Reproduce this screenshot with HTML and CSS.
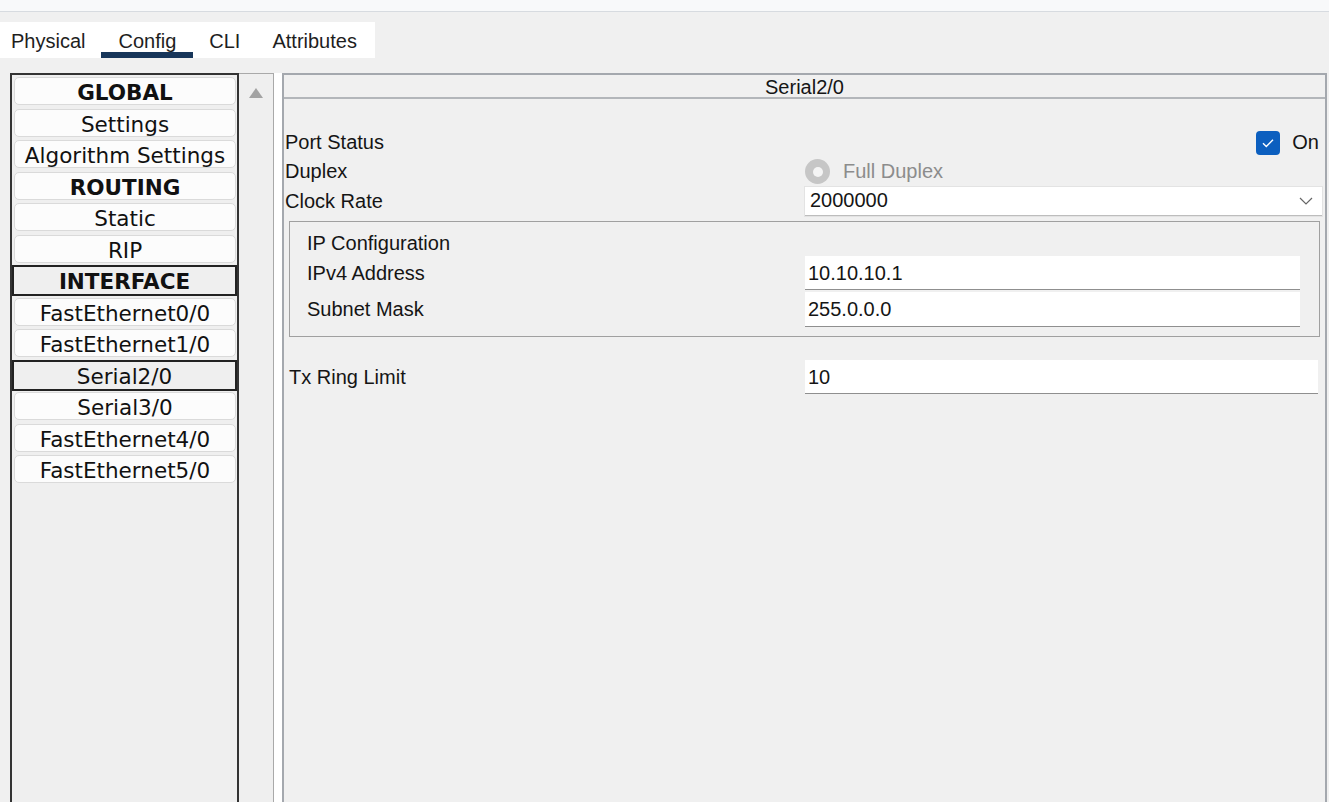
FILE: index.html
```html
<!DOCTYPE html>
<html>
<head>
<meta charset="utf-8">
<link rel="stylesheet" href="styles.css">
</head>
<body>
<div class="topbar"></div>
<div class="tabs">
  <div class="tab">Physical</div>
  <div class="tab active">Config</div>
  <div class="tab">CLI</div>
  <div class="tab">Attributes</div>
</div>
<div class="main">
  <div class="nav">
    <div class="item bold">GLOBAL</div>
    <div class="item">Settings</div>
    <div class="item">Algorithm Settings</div>
    <div class="item bold">ROUTING</div>
    <div class="item">Static</div>
    <div class="item">RIP</div>
    <div class="item bold sel">INTERFACE</div>
    <div class="item">FastEthernet0/0</div>
    <div class="item">FastEthernet1/0</div>
    <div class="item sel">Serial2/0</div>
    <div class="item">Serial3/0</div>
    <div class="item">FastEthernet4/0</div>
    <div class="item">FastEthernet5/0</div>
  </div>
  <div class="scroll"><div class="arrow"></div></div>
  <div class="gap"></div>
  <div class="panel">
    <div class="panel-head">Serial2/0</div>
    <div class="panel-body">
      <div class="row">
        <div class="label">Port Status</div>
        <div class="ctrl right">
          <span class="check"><svg width="24" height="24" viewBox="0 0 24 24"><path d="M7 12.2l3.3 3.3L17 8.8" fill="none" stroke="#fff" stroke-width="1.4"/></svg></span>
          <span class="on">On</span>
        </div>
      </div>
      <div class="row">
        <div class="label">Duplex</div>
        <div class="ctrl">
          <span class="radio"><span class="dot"></span></span>
          <span class="disabled">Full Duplex</span>
        </div>
      </div>
      <div class="row">
        <div class="label">Clock Rate</div>
        <div class="ctrl">
          <div class="select">
            <span>2000000</span>
            <svg width="14" height="8" viewBox="0 0 14 8"><path d="M1 1l6 6 6-6" fill="none" stroke="#666" stroke-width="1.2"/></svg>
          </div>
        </div>
      </div>
      <div class="ipbox">
        <div class="iptitle">IP Configuration</div>
        <div class="iprow">
          <div class="iplabel">IPv4 Address</div>
          <div class="input">10.10.10.1</div>
        </div>
        <div class="iprow">
          <div class="iplabel">Subnet Mask</div>
          <div class="input tall">255.0.0.0</div>
        </div>
      </div>
      <div class="txrow">
        <div class="txlabel">Tx Ring Limit</div>
        <div class="input tx">10</div>
      </div>
    </div>
  </div>
</div>
</body>
</html>
```
FILE: styles.css
```css
* { box-sizing: border-box; }
html, body { margin: 0; padding: 0; }
body {
  background: #f0f0f0;
  font-family: "Liberation Sans", Arial, sans-serif;
  color: #151515;
  height: 802px;
  overflow: hidden;
  display: flex;
  flex-direction: column;
}
.topbar {
  height: 12px;
  background: #f8f9fa;
  border-bottom: 1px solid #d7dbe0;
  flex: none;
}
.tabs {
  margin-top: 10px;
  width: 375px;
  height: 36px;
  background: #fff;
  display: flex;
  flex: none;
  font-size: 20px;
}
.tab {
  padding: 0 16px;
  height: 36px;
  line-height: 39px;
  color: #1e1e1e;
}
.tab:first-child { margin-left: -5px; }
.tab.active { padding: 0 17px 0 17px; box-shadow: inset 0 -6px 0 #17365a; }

.main {
  flex: 1;
  display: flex;
  margin-top: 15px;
  min-height: 0;
}
.nav {
  margin-left: 10px;
  width: 229px;
  border: 2px solid #333;
  border-bottom: none;
  background: #efefef;
  padding: 2px 0 0 0;
  font-family: "DejaVu Sans", Verdana, sans-serif;
  font-size: 21.5px;
  color: #111;
}
.item {
  height: 28px;
  margin: 0 1px 3.5px 2px;
  background: #fcfcfc;
  border: 1px solid #dadada;
  border-radius: 5px;
  text-align: center;
  line-height: 29px;
  white-space: nowrap;
}
.item.bold { font-weight: bold; }
.item.sel {
  height: 31px;
  margin: -1px 0 1.5px 0;
  border: 2px solid #222;
  border-radius: 0;
  background: #efefef;
  line-height: 30px;
}
.scroll {
  width: 35px;
  background: #efefef;
  border-top: 1px solid #a9a9a9;
  border-right: 1px solid #a9a9a9;
  display: flex;
  justify-content: center;
  padding-top: 14px;
}
.arrow {
  width: 0; height: 0;
  border-left: 7.5px solid transparent;
  border-right: 7.5px solid transparent;
  border-bottom: 10px solid #a3a3a3;
}
.gap { width: 8px; background: #fff; }
.panel {
  width: 1045px;
  border: 2px solid #a4a8ae;
  border-bottom: none;
  background: #f0f0f0;
  display: flex;
  flex-direction: column;
}
.panel-head {
  height: 24px;
  border-bottom: 2px solid #b3b6ba;
  text-align: center;
  font-size: 20px;
  line-height: 24px;
}
.panel-body {
  padding: 29px 0 0 0;
  font-size: 20px;
}
.row {
  display: flex;
  height: 29px;
  align-items: center;
}
.row:nth-child(3) { padding-top: 1px; }
.label {
  flex: 0 0 521px;
  padding-left: 1px;
}
.ctrl {
  flex: 1;
  display: flex;
  align-items: center;
  height: 100%;
}
.ctrl.right {
  justify-content: flex-end;
  padding-right: 6px;
}
.check {
  width: 24px; height: 24px;
  background: #0c5fbf;
  border-radius: 4px;
  display: flex;
}
.on { margin-left: 12px; }
.radio {
  width: 25px; height: 25px;
  border-radius: 50%;
  background: #c6c6c6;
  display: flex;
  align-items: center;
  justify-content: center;
}
.dot {
  width: 10px; height: 10px;
  border-radius: 50%;
  background: #f4f4f4;
}
.disabled { margin-left: 13px; color: #8c8c8c; }
.select {
  width: 517px;
  height: 29px;
  background: #fff;
  border-bottom: 1px solid #bdbdbd;
  box-shadow: 0 0 0 1px #e3e3e3;
  display: flex;
  align-items: center;
  justify-content: space-between;
  padding: 0 9px 0 5px;
}
.ipbox {
  margin: 6px 5px 0 5px;
  height: 116px;
  border: 1px solid #a0a0a0;
  padding: 10px 19px 0 17px;
}
.iptitle {
  line-height: 22px;
}
.iprow {
  display: flex;
  align-items: center;
  margin-top: 2px;
}
.iplabel { flex: 0 0 498px; }
.input {
  flex: 1;
  height: 34px;
  background: #fff;
  border-bottom: 1px solid #8f8f8f;
  line-height: 34px;
  padding-left: 3px;
}
.input.tall { height: 35px; }
.txrow {
  display: flex;
  align-items: center;
  margin: 23px 7px 0 5px;
}
.txlabel { flex: 0 0 516px; }
.input.tx { height: 34px; }
```
